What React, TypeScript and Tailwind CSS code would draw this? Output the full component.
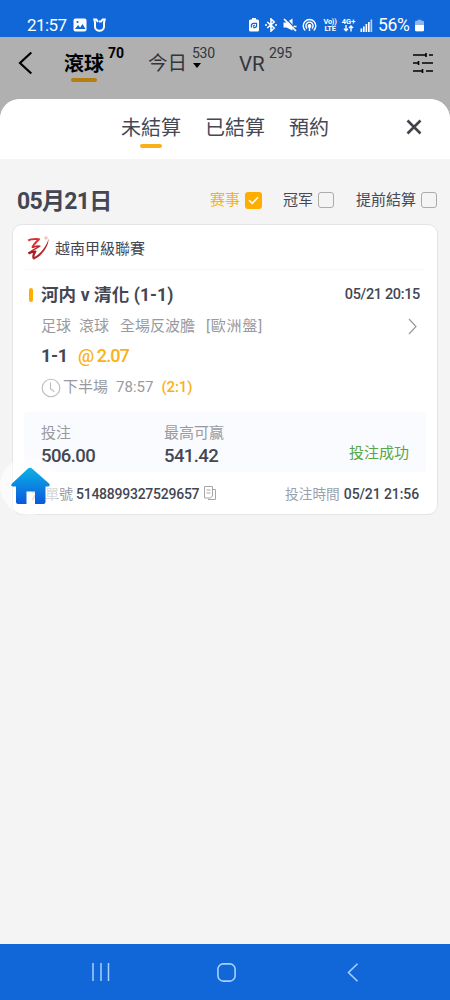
import clsx from 'clsx'
import type { ReactNode } from 'react'

function StatusBar() {
  return (
    <div className="flex h-[37px] items-end bg-[#1267d8] pb-[2px] text-white">
      <div className="ml-[27px] h-5 w-[46px] text-[17px] leading-5 tracking-[-0.55px]">
        21:57
      </div>
      <svg className="mb-[3px] h-[14px] w-[14px]" viewBox="0 0 14 14">
        <rect x="0.5" y="0.5" width="13" height="13" rx="2" fill="#fff" />
        <path d="M2 11l3-4 2.2 2.4L9.5 6l3 5z" fill="#1267d8" />
        <circle cx="4.5" cy="4" r="1.1" fill="#1267d8" />
      </svg>
      <svg
        className="mb-[3px] ml-[6px] h-[14px] w-[13px]"
        viewBox="0 0 13 14"
        fill="none"
        stroke="#fff"
        strokeWidth="2"
      >
        <path d="M5 4L3.4 1.6H1.3L2 4.5v4a4.5 4.3 0 0 0 9 0v-4l.7-2.9H9.6L8 3.6H6" />
      </svg>

      <div className="ml-auto flex h-5 items-center pr-[26px]">
        <svg className="mr-[6px] h-[14px] w-[10px]" viewBox="0 0 10 14">
          <path d="M3 0h4v1.5h1.5A1.5 1.5 0 0 1 10 3v9a1.5 1.5 0 0 1-1.5 1.5h-7A1.5 1.5 0 0 1 0 12V3a1.5 1.5 0 0 1 1.5-1.5H3z" fill="#fff" />
          <path d="M2.4 9.6V7.4a2 2 0 0 1 2-2h3.2v2.2a2 2 0 0 1-2 2H4.2M3.8 8.4l2-1.4" fill="none" stroke="#1267d8" strokeWidth="1.2" />
        </svg>
        <svg
          className="mr-[6px] h-[14px] w-[12px]"
          viewBox="0 0 12 14"
          fill="none"
          stroke="#fff"
          strokeWidth="1.6"
        >
          <path d="M2.2 4l7 6L6 13V1l3.2 3-7 6M0 7h2M10 7h2" />
        </svg>
        <svg className="mr-[5px] h-[14px] w-[14px]" viewBox="0 0 14 14">
          <path d="M0.5 4.5h3L9.5 0.5v12L3.5 9.5h-3z" fill="#fff" />
          <path d="M3 0.5l10 11" stroke="#1267d8" strokeWidth="1.2" />
          <path d="M1 1l12 12M10.5 8.5h3" stroke="#fff" strokeWidth="1.7" />
        </svg>
        <svg
          className="mr-[6px] h-[14px] w-[15px]"
          viewBox="0 0 15 14"
          fill="none"
          stroke="#fff"
          strokeWidth="1.4"
        >
          <path d="M3.3 12.5a6.3 6.3 0 1 1 8.4 0M5.1 10.4a3.6 3.6 0 1 1 4.8 0" />
          <circle cx="7.5" cy="8" r="1.2" fill="#fff" />
          <path d="M7.5 8v5" />
        </svg>
        <div className="mr-[4px] w-[14px] text-center text-[7.5px] font-bold leading-[7px] tracking-[-0.3px]">
          <div>Vo))</div>
          <div>LTE</div>
        </div>
        <div className="mr-[4px] w-[15px]">
          <div className="text-center text-[7.5px] font-bold leading-[7px]">4G+</div>
          <svg
            className="mx-auto h-[7px] w-[11px]"
            viewBox="0 0 11 7"
            fill="none"
            stroke="#fff"
            strokeWidth="1.4"
          >
            <path d="M3 0v5.5M1 3.7l2 2 2-2M8 6.5V1M6 3l2-2 2 2" />
          </svg>
        </div>
        <svg className="mr-[5px] h-[13px] w-[13px]" viewBox="0 0 13 13" fill="#fff">
          <path d="M0.5 9.5h1.7V13H0.5zM3 7.5h1.7V13H3zM5.5 5h1.7v8H5.5zM8 3h1.7v10H8z" />
          <path d="M10.5 0.5h1.7V13h-1.7z" opacity=".7" />
        </svg>
        <div className="w-[37px] text-[17.5px] leading-5 tracking-[-0.3px]">56%</div>
        <svg className="h-[13px] w-[9px]" viewBox="0 0 10 13">
          <path d="M3 0h4v1.3h1.5A1.5 1.5 0 0 1 10 2.8v8.7A1.5 1.5 0 0 1 8.5 13h-7A1.5 1.5 0 0 1 0 11.5V2.8a1.5 1.5 0 0 1 1.5-1.5H3z" fill="#8db6ed" />
          <path d="M0 6h10v5.5A1.5 1.5 0 0 1 8.5 13h-7A1.5 1.5 0 0 1 0 11.5z" fill="#fff" />
        </svg>
      </div>
    </div>
  )
}

function Header() {
  return (
    <div className="flex h-[62px] items-start bg-[#b0b0b0] text-[#33353d]">
      <svg
        className="ml-[18px] mt-[14px] h-6 w-[15px]"
        viewBox="0 0 15 24"
        fill="none"
        stroke="#000"
        strokeWidth="2.2"
      >
        <path d="M13.3 1.5L2 12l11.3 10.5" />
      </svg>
      <div className="ml-[31px] w-10 pt-[12px]">
        <div className="whitespace-nowrap text-[20px] font-bold leading-[30px] text-black">
          滾球
        </div>
        <div className="mx-auto -mt-px h-1 w-[26px] rounded-full bg-[#b47e10]" />
      </div>
      <div className="ml-1 mt-[6px] w-[40px] text-[14px] font-bold leading-5 text-black">
        70
      </div>
      <div className="mt-[12px] w-10 whitespace-nowrap text-[19.5px] leading-[30px]">今日</div>
      <div className="ml-1 mt-[6px] w-[47px] text-[14px] leading-5 tracking-[-0.3px]">
        530
        <div className="ml-[1px] h-0 w-0 border-x-[4.5px] border-t-[5px] border-x-transparent border-t-black" />
      </div>
      <div className="mt-[12px] w-[28px] text-[20.5px] leading-[30px]">VR</div>
      <div className="ml-[2px] mt-[6px] text-[14px] leading-5 tracking-[-0.2px]">295</div>
      <svg
        className="ml-auto mr-[17px] mt-[15px] h-[22px] w-5"
        viewBox="0 0 20 22"
        fill="none"
        stroke="#000"
        strokeWidth="1.6"
      >
        <path d="M0 3h13M16 3h4M13 1v4M0 11h5.5M9 11h11M5.5 9v4M0 19h9.5M13 19h7M9.5 17v4" />
      </svg>
    </div>
  )
}

function Checkbox({
  label,
  checked,
  className,
}: {
  label: string
  checked?: boolean
  className?: string
}) {
  return (
    <div className={clsx('flex items-center', className)}>
      <span
        className={clsx(
          'whitespace-nowrap text-[15px] leading-6',
          checked ? 'text-[#fbb116]' : 'text-[#454956]',
        )}
      >
        {label}
      </span>
      {checked ? (
        <span className="ml-[5px] flex h-[17px] w-[17px] items-center justify-center rounded-[3px] bg-[#ffae00]">
          <svg className="h-[9px] w-[11px]" viewBox="0 0 11 9" fill="none" stroke="#fff" strokeWidth="1.6">
            <path d="M1 4.2l3.3 3.2L10 1.3" />
          </svg>
        </span>
      ) : (
        <span className="ml-[5px] h-4 w-4 rounded-[3px] border border-[#aaabad]" />
      )}
    </div>
  )
}

function Stat({ label, value }: { label: string; value: string }) {
  return (
    <div className="w-[123px] pt-[10px]">
      <div className="text-[15px] leading-[22px] text-[#989a9f]">{label}</div>
      <div className="text-[18.5px] font-medium leading-6 tracking-[-0.6px] text-[#434754]">
        {value}
      </div>
    </div>
  )
}

function Row({ className, children }: { className?: string; children: ReactNode }) {
  return <div className={clsx('flex items-center whitespace-nowrap', className)}>{children}</div>
}

function BetCard() {
  return (
    <div className="ml-3 h-[291px] w-[426px] rounded-[10px] border border-[#e3e4e6] bg-white text-[#434754]">
      {/* League */}
      <Row className="mx-3 h-[45px] border-b border-[#f8f8f9] pt-[3px]">
        <svg className="ml-[2px] h-[25px] w-6" viewBox="0 0 24 25" fill="none" strokeLinejoin="round">
          <path d="M1.3 4.6C4 2.6 8 3 12 3.2 9 6 6.5 8.5 5.2 11.6" stroke="#d8302f" strokeWidth="2" />
          <path d="M5.2 11.6c2.8-1.4 5.6-2 7.6-1.4C10 12 5 14 1.5 17.2" stroke="#c4262a" strokeWidth="1.5" />
          <path d="M1.5 17.4c2.5-.9 5-2.2 6.8-1.8C6.6 18 5.8 20.4 6.8 22.6" stroke="#a51c20" strokeWidth="2.2" />
          <path d="M6.2 23.9C13.5 21 21.6 12 21.6 2.6 19.4 10.8 13.5 17.8 7 21.2z" fill="#b3242a" />
          <circle cx="19" cy="2" r="1.2" stroke="#dc8c91" strokeWidth=".7" />
        </svg>
        <span className="ml-1 text-[15px] leading-6">越南甲級聯賽</span>
      </Row>

      {/* Match */}
      <Row className="h-[49px] pl-4 pr-[17px]">
        <span className="h-[14px] w-1 rounded-full bg-[#ffae00]" />
        <span className="ml-2 text-[17.5px] font-bold leading-6 tracking-[0.1px]">
          河内 v 清化 (1-1)
        </span>
        <span className="ml-auto text-[14.5px] font-medium leading-6 tracking-[-0.35px]">
          05/21 20:15
        </span>
      </Row>
      <Row className="h-[13px] pl-7 pr-[20px] pt-px text-[15px] text-[#989a9f]">
        <span>足球</span>
        <span className="ml-2">滾球</span>
        <span className="ml-[11px]">全場反波膽</span>
        <span className="ml-[11px] tracking-[0.8px]">[歐洲盤]</span>
        <svg className="ml-auto h-[17px] w-[9px]" viewBox="0 0 9 17" fill="none" stroke="#989a9f" strokeWidth="1.2">
          <path d="M1 1l7 7.5L1 16" />
        </svg>
      </Row>
      <Row className="mt-[10px] h-[26px] pl-7 text-[18px]">
        <span className="w-[26px] font-bold tracking-[-0.3px]">1-1</span>
        <span className="ml-[11px] font-medium tracking-[-0.9px] text-[#fbb116]">@ 2.07</span>
      </Row>
      <Row className="mt-[7px] h-[24px] pl-7 text-[15px] text-[#989a9f]">
        <svg className="mt-[2px] h-5 w-5" viewBox="0 0 20 20" fill="none" stroke="#bcbdc1" strokeWidth="1.1">
          <circle cx="10" cy="10" r="8.8" />
          <path d="M9.5 4.5v6.3l3.8 3" />
        </svg>
        <span className="ml-[2px]">下半場</span>
        <span className="ml-2">78:57</span>
        <span className="ml-2 font-medium tracking-[-0.1px] text-[#fbb116]">(2:1)</span>
      </Row>

      {/* Stake */}
      <div className="mx-[11px] mt-[13px] flex h-[60px] rounded bg-[#fafbfe] pl-[17px] pr-[17px]">
        <Stat label="投注" value="506.00" />
        <Stat label="最高可赢" value="541.42" />
        <span className="ml-auto mt-[30px] text-[15px] leading-[22px] text-[#56a747]">投注成功</span>
      </div>

      <Row className="h-[44px] pl-[18px] pr-[18px] pt-px text-[14px]">
        <span className="text-[#989a9f]">注單號</span>
        <span className="ml-[3px] font-medium tracking-[-0.25px]">5148899327529657</span>
        <svg className="mb-[3px] ml-[5px] h-[14px] w-3" viewBox="0 0 12 14" fill="none" stroke="#a5a6aa">
          <path d="M.5.5h8v9.5L6.5 12h-6zM8.5 3.5h3v10H4M2.5 4h4M2.5 7h4" />
        </svg>
        <span className="ml-auto text-[13.7px] text-[#9aa1ad]">投注時間</span>
        <span className="ml-[4px] font-medium tracking-[-0.1px]">05/21 21:56</span>
      </Row>
    </div>
  )
}

function HomeButton() {
  return (
    <div className="absolute left-0 top-[457px] flex h-[58px] w-[60px] items-center justify-center rounded-full bg-white/60">
      <svg className="mb-px ml-[2px] mr-px h-[38px] w-[39px]" viewBox="0 0 39 38">
        <defs>
          <linearGradient id="home" x1="0" y1="0" x2="0" y2="1">
            <stop offset="0" stopColor="#0bb3e7" />
            <stop offset="1" stopColor="#0b58db" />
          </linearGradient>
        </defs>
        <path
          d="M17 1.5q2-1.7 4 0L38 16.5q2 2.5-1 3h-2.5V35q0 2-2 2H24V24.5h-8.5V37H7q-2 0-2-2V19.5H2q-3-.5-1-3z"
          fill="url(#home)"
        />
      </svg>
    </div>
  )
}

function BottomNav() {
  return (
    <div className="flex h-14 items-center bg-[#1267d8]">
      <svg className="ml-[91px] h-[18px] w-[19px]" viewBox="0 0 19 18" stroke="#a5d1ff" strokeWidth="1.5">
        <path d="M2 0v18M10 0v18M17.5 0v18" />
      </svg>
      <svg className="ml-[107px] h-[19px] w-[19px]" viewBox="0 0 19 19" fill="none" stroke="#a5d1ff" strokeWidth="1.6">
        <rect x=".9" y=".9" width="17.2" height="17.2" rx="5.3" />
      </svg>
      <svg className="ml-[111px] h-[19px] w-3" viewBox="0 0 12 19" fill="none" stroke="#a5d1ff" strokeWidth="1.6">
        <path d="M10.5.7L1.5 9.5l9 8.8" />
      </svg>
    </div>
  )
}

export default function App() {
  return (
    <div className="relative flex h-[1000px] w-[450px] flex-col overflow-hidden bg-[#b0b0b0] font-['Roboto','Noto_Sans_CJK_TC',sans-serif]">
      <StatusBar />
      <Header />
      <div className="flex-1 overflow-hidden rounded-t-[20px] bg-[#f4f4f4]">
        {/* Tabs */}
        <div className="flex h-[60px] bg-white pl-[121px] pr-[28px] text-[20px] text-[#454956]">
          <div className="w-[60px] pt-[14px] leading-[30px]">
            未結算
            <div className="mx-auto mt-px h-1 w-[22px] rounded-full bg-[#fbb116]" />
          </div>
          <div className="ml-6 pt-[14px] leading-[30px]">已結算</div>
          <div className="ml-6 pt-[14px] leading-[30px]">預約</div>
          <svg className="ml-auto mt-5 h-4 w-4" viewBox="0 0 16 16" fill="none" stroke="#41434a" strokeWidth="2.6">
            <path d="M1.5 1.5l13 13M14.5 1.5l-13 13" />
          </svg>
        </div>

        {/* Date and filters */}
        <div className="flex h-[65px] items-center pl-[17px] pr-[13px] pt-[17px]">
          <span className="pt-[3px] text-[23px] font-bold leading-8 tracking-[-0.7px] text-[#434754]">
            05月21日
          </span>
          <Checkbox label="赛事" checked className="ml-auto" />
          <Checkbox label="冠军" className="ml-[21px]" />
          <Checkbox label="提前結算" className="ml-[22px]" />
        </div>

        <BetCard />
      </div>
      <BottomNav />
      <HomeButton />
    </div>
  )
}
